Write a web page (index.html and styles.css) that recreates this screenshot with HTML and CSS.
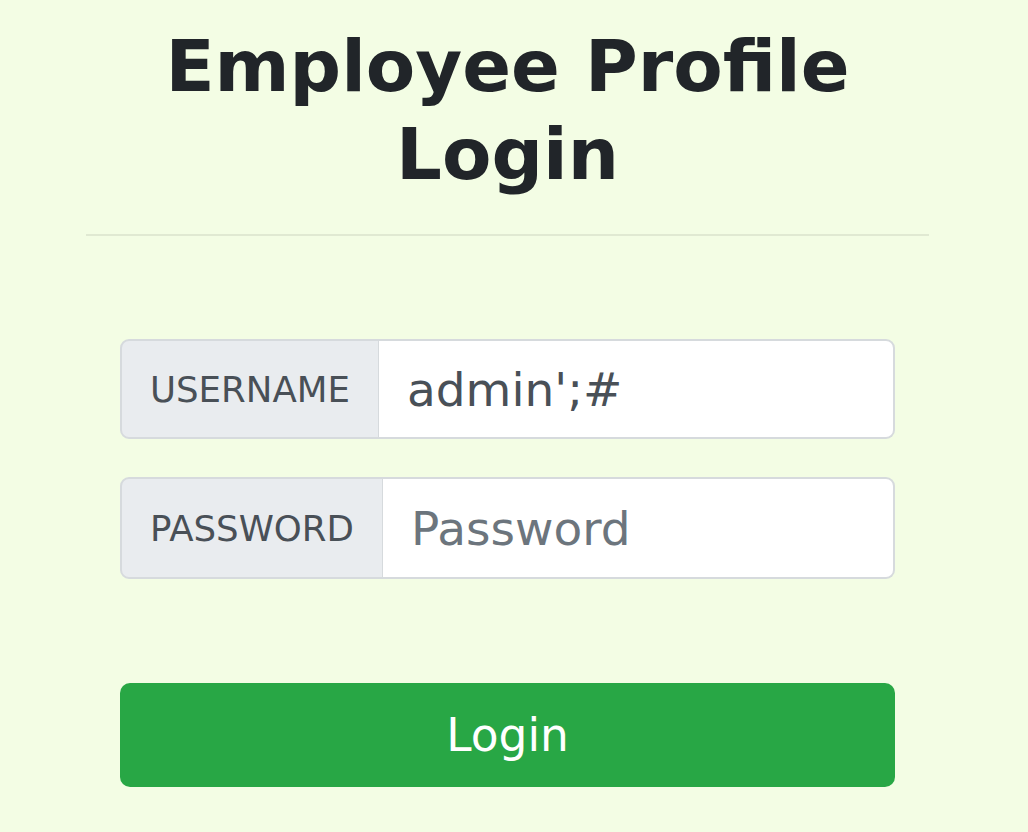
FILE: index.html
```html
<!DOCTYPE html>
<html>
<head>
<meta charset="utf-8">
<link rel="stylesheet" href="styles.css">
</head>
<body>
<div class="container">
  <h1 class="title">Employee Profile Login</h1>
  <hr class="rule">
  <form class="form">
    <div class="group group-user">
      <span class="addon">USERNAME</span>
      <input class="field" type="text" value="admin';#">
    </div>
    <div class="group group-pass">
      <span class="addon">PASSWORD</span>
      <input class="field" type="password" placeholder="Password">
    </div>
    <button class="btn" type="button">Login</button>
  </form>
</div>
</body>
</html>
```
FILE: styles.css
```css
html, body {
  margin: 0;
  padding: 0;
  background: #f3fde4;
  font-family: "DejaVu Sans", sans-serif;
}
.container {
  width: 843px;
  margin-left: 86px;
}
.title {
  margin: 22px 0 0;
  font-size: 72px;
  line-height: 88px;
  font-weight: bold;
  color: #212529;
  text-align: center;
  padding: 0 50px;
}
.rule {
  margin: 36px 0 0;
  border: 0;
  border-top: 2px solid rgba(0,0,0,0.08);
}
.form {
  margin: 103px 34px 0;
  display: flex;
  flex-direction: column;
}
.group {
  display: flex;
}
.group-user {
  height: 100px;
  margin-bottom: 38px;
}
.group-pass {
  height: 102px;
}
.addon {
  display: flex;
  align-items: center;
  box-sizing: border-box;
  padding: 0 28px;
  background: #e9ecef;
  border: 2px solid #d6dadd;
  border-right-width: 1px;
  border-radius: 9px 0 0 9px;
  color: #495057;
  font-size: 35.6px;
}
.field {
  flex: 1;
  min-width: 0;
  box-sizing: border-box;
  height: 100%;
  border: 2px solid #d6dadd;
  border-left: 0;
  border-radius: 0 9px 9px 0;
  background: #fff;
  padding: 0 28px;
  font-family: "DejaVu Sans", sans-serif;
  font-size: 47px;
  color: #495057;
  outline: none;
}
.field::placeholder {
  color: #6c757d;
}
.btn {
  margin-top: 104px;
  height: 104px;
  border: 0;
  border-radius: 10px;
  background: #28a745;
  color: #fff;
  font-family: "DejaVu Sans", sans-serif;
  font-size: 45.5px;
}
```
